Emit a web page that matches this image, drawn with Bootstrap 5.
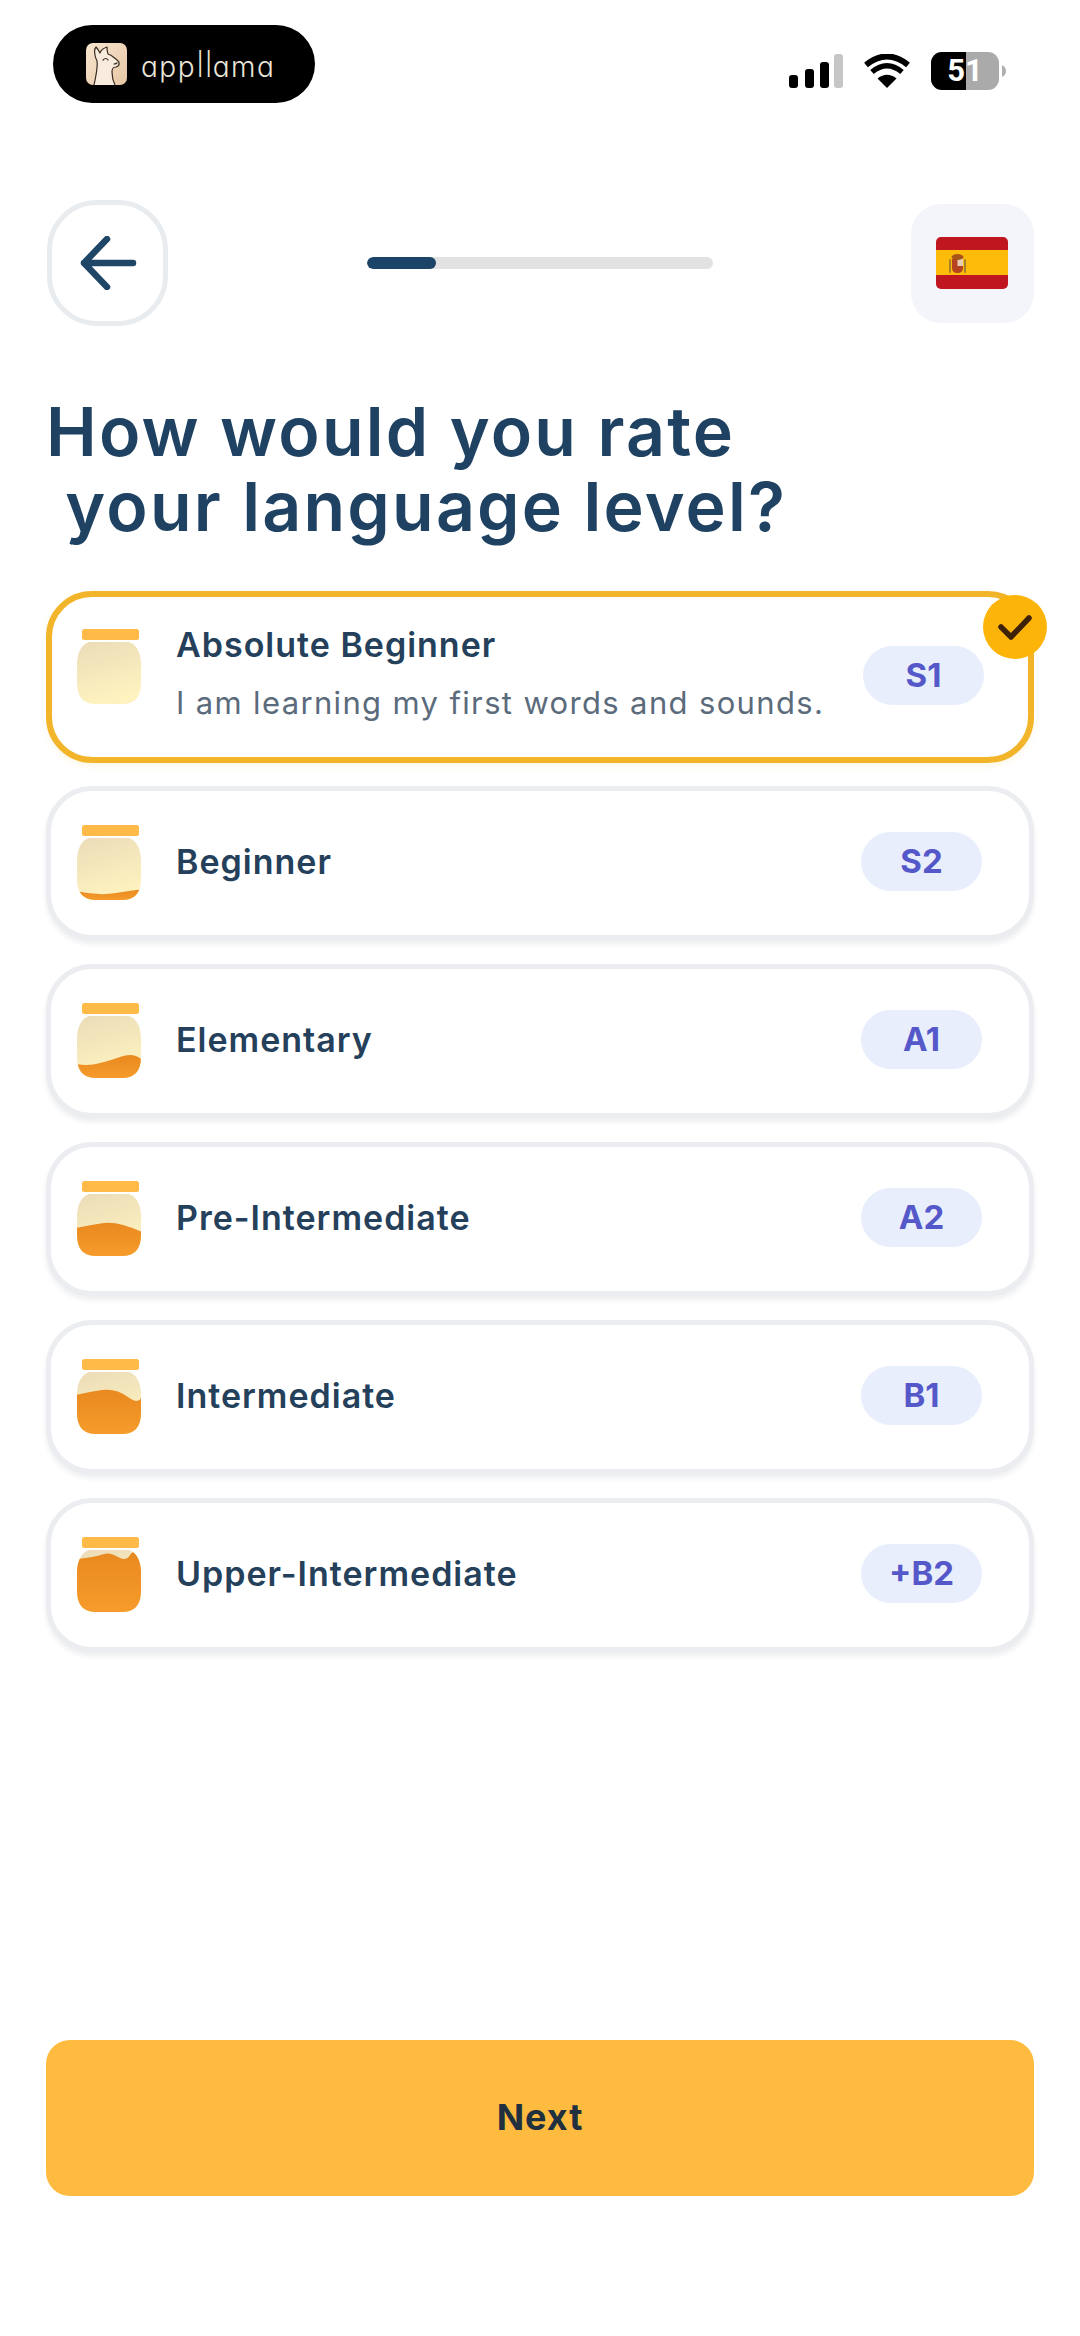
<!DOCTYPE html>
<html lang="en">
<head>
<meta charset="utf-8">
<title>Language level</title>
<link href="https://cdn.jsdelivr.net/npm/bootstrap@5.3.0/dist/css/bootstrap.min.css" rel="stylesheet">
<style>
html,body{background:#fff;margin:0}
.screen{height:2336px;font-family:Inter,"Open Sans",sans-serif;color:#1f4161;padding:25px 46px 140px}
.status-row{height:78px}
.brand-pill{width:262px;height:78px;margin-left:7px;background:#000;border-radius:39px;padding-left:33px;gap:14px}
.brand-name{font-family:Inter,sans-serif;font-feature-settings:"cv11";font-weight:300;font-size:28px;letter-spacing:1.5px;color:#ebe4d9;line-height:1;margin-top:3px}
.brand-tall{font-size:37px;font-weight:200;letter-spacing:0;line-height:.7}
.sys-icons{margin-top:27px;margin-right:28px;gap:21px}
.batt-wrap{position:relative;width:75px;height:38px}
.batt-num{position:absolute;left:0;top:0;width:68px;height:38px;line-height:38px;text-align:center;font-family:Roboto,sans-serif;font-weight:700;font-size:31px;color:#fff}
.top-row{margin-top:97px;height:126px}
.back-btn{width:121px;height:126px;margin-left:1px;border:5px solid #e9ecef;border-radius:50px;background:#fff;padding:0}
.lang-btn{width:123px;height:119px;border-radius:30px;background:#f4f5fa;border:0;padding:0 2px 0 0}
.prog{width:346px;height:12px;background:#e2e2e3;border-radius:6px}
.prog .progress-bar{background:#1c4468;border-radius:6px}
.page-title{font-family:Inter,sans-serif;font-weight:600;font-size:68px;line-height:75px;letter-spacing:2.2px;color:#1f4262;margin:68px 0 0 0;white-space:pre-wrap}
.level-list{margin-top:47px;gap:24px}
.level-item{position:relative;height:154px;border:5px solid #ebedf0;border-radius:46px;background:#fff;box-shadow:0 4px 5px rgba(30,40,60,.08);padding:0 47px 0 25px}
.level-item.is-on{height:172px;border:6px solid #f2b52a;margin-bottom:-1px;padding:0 44px 0 24px;box-shadow:0 3px 6px rgba(242,183,47,.12)}
.jar{width:66px;height:76px;flex:none;margin-right:34px}
.is-on .jar{margin-bottom:20px}
.lvl-name{font-weight:600;font-size:34px;line-height:40px;letter-spacing:1px;color:#24405a;margin-top:-3px}
.lvl-desc{font-weight:400;font-size:31px;line-height:40px;letter-spacing:1.35px;color:#5b6b7b;margin-top:18px;white-space:nowrap}
.is-on .lvl-text{margin-top:-4px}
.lvl-tag{width:121px;height:59px;line-height:59px;padding:0;background:#e8eefc;border-radius:30px;color:#5558c9;font-weight:700;font-size:33px;margin-top:-4px}
.tick{position:absolute;right:-19px;top:-2px;width:64px;height:64px;border-radius:50%;background:#fdb409;display:flex;align-items:center;justify-content:center}
.next-btn{height:156px;background:#ffbb3f;border:0;border-radius:24px;font-family:Inter,sans-serif;font-weight:700;font-size:36px;letter-spacing:1px;color:#20303f;padding-bottom:8px}
.next-btn:hover{background:#ffbb3f;color:#20303f}
</style>
</head>
<body>
<div class="screen d-flex flex-column">
  <div class="status-row d-flex justify-content-between align-items-start">
    <div class="brand-pill d-flex align-items-center">
      <svg width="41" height="42" viewBox="0 0 41 42" aria-hidden="true">
        <defs><linearGradient id="cream" x1="0" y1="0" x2="1" y2="1"><stop offset="0" stop-color="#f8e6d0"/><stop offset="1" stop-color="#e6c6a4"/></linearGradient></defs>
        <rect width="41" height="42" rx="7" fill="url(#cream)"/>
        <path d="M8 42 C10 32 12 25 11 18 C8 12 8 6 10 4 C12 6 13 8 14 10 C15 7 18 5 21 4 C21 7 21 9 22 11 C26 12 28 15 31 17 C34 19 34 23 30 24 C27 24 26 25 26 29 C26 34 27 38 29 42" fill="#f7ecdd" stroke="#3a2c22" stroke-width="1.2" stroke-linejoin="round"/>
        <path d="M17 17 q3 -3 5 0 M28 21 q2 0 3 -1" fill="none" stroke="#3a2c22" stroke-width="1.2" stroke-linecap="round"/>
      </svg>
      <span class="brand-name">app<span class="brand-tall">ll</span>ama</span>
    </div>
    <div class="sys-icons d-flex align-items-center">
      <svg width="54" height="34" viewBox="0 0 54 34" aria-hidden="true">
        <rect x="0" y="21" width="9" height="13" rx="3" fill="#000"/>
        <rect x="16" y="15" width="9" height="19" rx="3" fill="#000"/>
        <rect x="31" y="8" width="9" height="26" rx="3" fill="#000"/>
        <rect x="45" y="0" width="9" height="34" rx="3" fill="#c6c6c6"/>
      </svg>
      <svg width="46" height="34" viewBox="0 0 46 34" aria-hidden="true">
        <path d="M23 34 L13.5 24.5 Q23 17 32.500 24.500Z" fill="#000"/>
        <path d="M8 18 Q23 5.500 38 18" fill="none" stroke="#000" stroke-width="5.500"/>
        <path d="M2 11 Q23 -6 44 11" fill="none" stroke="#000" stroke-width="6"/>
      </svg>
      <div class="batt-wrap">
        <svg width="75" height="38" viewBox="0 0 75 38" aria-hidden="true">
          <defs><clipPath id="battclip"><rect width="68" height="38" rx="11"/></clipPath></defs>
          <g clip-path="url(#battclip)"><rect width="68" height="38" fill="#aaa"/><rect width="35" height="38" fill="#000"/></g>
          <path d="M71 13 q4 2 4 6 t-4 6z" fill="#b0b0b0"/>
        </svg>
        <span class="batt-num">51</span>
      </div>
    </div>
  </div>

  <div class="top-row d-flex justify-content-between align-items-center">
    <button class="back-btn d-flex align-items-center justify-content-center" type="button" aria-label="Back">
      <svg width="58" height="54" viewBox="0 0 58 54" aria-hidden="true"><path d="M28 3 L5 27 L28 51 M5 27 H54" fill="none" stroke="#1f4567" stroke-width="6.500" stroke-linecap="round" stroke-linejoin="round"/></svg>
    </button>
    <div class="progress prog" role="progressbar" aria-valuenow="20" aria-valuemin="0" aria-valuemax="100"><div class="progress-bar" style="width:20%"></div></div>
    <button class="lang-btn d-flex align-items-center justify-content-center" type="button" aria-label="Spanish">
      <svg width="72" height="52" viewBox="0 0 72 52" aria-hidden="true">
        <defs><clipPath id="flagclip"><rect width="72" height="52" rx="5"/></clipPath></defs>
        <g clip-path="url(#flagclip)">
          <rect width="72" height="52" fill="#c0161f"/>
          <rect y="13" width="72" height="25" fill="#fdbb0a"/>
          <path d="M16 22 H27 V31 Q27 36 21.500 36 Q16 36 16 31Z" fill="#b5431f"/>
          <path d="M21.500 22 H27 V29 H21.500Z" fill="#e6cfb4"/>
          <ellipse cx="21.500" cy="20" rx="6" ry="3" fill="#a8551c"/>
          <rect x="13" y="22" width="2" height="14" rx="1" fill="#a9802a"/>
          <rect x="28" y="22" width="2" height="14" rx="1" fill="#a9802a"/>
        </g>
      </svg>
    </button>
  </div>

  <h1 class="page-title">How would you rate
 your language level?</h1>

  <div class="level-list d-flex flex-column">
    <div class="level-item is-on d-flex align-items-center">
      <svg class="jar" viewBox="0 0 66 76" aria-hidden="true">
        <defs>
          <linearGradient id="glass" x1="0" y1="0" x2="0.3" y2="1"><stop offset="0" stop-color="#ebdcb8"/><stop offset="1" stop-color="#fef2bf"/></linearGradient>
          <linearGradient id="honey" x1="0" y1="0" x2="0" y2="1"><stop offset="0" stop-color="#e8891f"/><stop offset="1" stop-color="#f79c2c"/></linearGradient>
          <clipPath id="jarclip"><path d="M13 13 H53 Q64 17 65 34 V54 Q65 75 46 75 H20 Q1 75 1 54 V34 Q2 17 13 13Z"/></clipPath>
        </defs>
        <rect x="6" y="0" width="57" height="11" rx="2.500" fill="#ffba47"/>
        <path d="M13 13 H53 Q64 17 65 34 V54 Q65 75 46 75 H20 Q1 75 1 54 V34 Q2 17 13 13Z" fill="url(#glass)"/>
      </svg>
      <div class="lvl-text flex-grow-1">
        <div class="lvl-name">Absolute Beginner</div>
        <div class="lvl-desc">I am learning my first words and sounds.</div>
      </div>
      <span class="badge lvl-tag">S1</span>
      <span class="tick"><svg width="36" height="30" viewBox="0 0 36 30" aria-hidden="true"><path d="M4 15 L14 25 L32 6" fill="none" stroke="#3d2208" stroke-width="5.500" stroke-linecap="round" stroke-linejoin="round"/></svg></span>
    </div>

    <div class="level-item d-flex align-items-center">
      <svg class="jar" viewBox="0 0 66 76" aria-hidden="true">
        <rect x="6" y="0" width="57" height="11" rx="2.500" fill="#ffba47"/>
        <path d="M13 13 H53 Q64 17 65 34 V54 Q65 75 46 75 H20 Q1 75 1 54 V34 Q2 17 13 13Z" fill="url(#glass)"/>
        <path d="M0 66 Q22 71 40 68 T66 64 V76 H0Z" fill="url(#honey)" clip-path="url(#jarclip)"/>
      </svg>
      <div class="lvl-name flex-grow-1">Beginner</div>
      <span class="badge lvl-tag">S2</span>
    </div>

    <div class="level-item d-flex align-items-center">
      <svg class="jar" viewBox="0 0 66 76" aria-hidden="true">
        <rect x="6" y="0" width="57" height="11" rx="2.500" fill="#ffba47"/>
        <path d="M13 13 H53 Q64 17 65 34 V54 Q65 75 46 75 H20 Q1 75 1 54 V34 Q2 17 13 13Z" fill="url(#glass)"/>
        <path d="M0 61 Q10 63 20 61 T44 54 T66 57 V76 H0Z" fill="url(#honey)" clip-path="url(#jarclip)"/>
      </svg>
      <div class="lvl-name flex-grow-1">Elementary</div>
      <span class="badge lvl-tag">A1</span>
    </div>

    <div class="level-item d-flex align-items-center">
      <svg class="jar" viewBox="0 0 66 76" aria-hidden="true">
        <rect x="6" y="0" width="57" height="11" rx="2.500" fill="#ffba47"/>
        <path d="M13 13 H53 Q64 17 65 34 V54 Q65 75 46 75 H20 Q1 75 1 54 V34 Q2 17 13 13Z" fill="url(#glass)"/>
        <path d="M0 47 Q14 44 28 42 T66 51 V76 H0Z" fill="url(#honey)" clip-path="url(#jarclip)"/>
      </svg>
      <div class="lvl-name flex-grow-1">Pre-Intermediate</div>
      <span class="badge lvl-tag">A2</span>
    </div>

    <div class="level-item d-flex align-items-center">
      <svg class="jar" viewBox="0 0 66 76" aria-hidden="true">
        <rect x="6" y="0" width="57" height="11" rx="2.500" fill="#ffba47"/>
        <path d="M13 13 H53 Q64 17 65 34 V54 Q65 75 46 75 H20 Q1 75 1 54 V34 Q2 17 13 13Z" fill="url(#glass)"/>
        <path d="M0 36 Q12 33 26 31 T52 38 T66 36 V76 H0Z" fill="url(#honey)" clip-path="url(#jarclip)"/>
      </svg>
      <div class="lvl-name flex-grow-1">Intermediate</div>
      <span class="badge lvl-tag">B1</span>
    </div>

    <div class="level-item d-flex align-items-center">
      <svg class="jar" viewBox="0 0 66 76" aria-hidden="true">
        <rect x="6" y="0" width="57" height="11" rx="2.500" fill="#ffba47"/>
        <path d="M13 13 H53 Q64 17 65 34 V54 Q65 75 46 75 H20 Q1 75 1 54 V34 Q2 17 13 13Z" fill="url(#glass)"/>
        <path d="M0 22 Q10 21 16 20 T28 17 T42 20 T54 18 T66 20 V76 H0Z" fill="url(#honey)" clip-path="url(#jarclip)"/>
      </svg>
      <div class="lvl-name flex-grow-1">Upper-Intermediate</div>
      <span class="badge lvl-tag">+B2</span>
    </div>
  </div>

  <button class="btn next-btn w-100 mt-auto" type="button">Next</button>
</div>
<script src="https://cdn.jsdelivr.net/npm/bootstrap@5.3.0/dist/js/bootstrap.bundle.min.js"></script>
</body>
</html>
